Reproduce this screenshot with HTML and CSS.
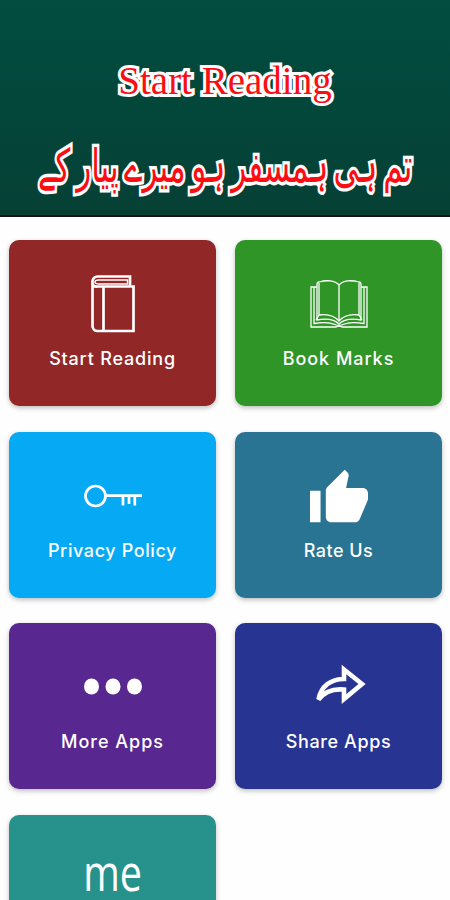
FILE: index.html
```
<!DOCTYPE html>
<html lang="en">
<head>
    <meta charset="UTF-8">
    <meta name="viewport" content="width=device-width, initial-scale=1.0">
    <title>Start Reading</title>
    <link rel="stylesheet" href="styles.css">
</head>
<body>

    <!-- Header -->
    <div class="header">
        <h1 class="title">Start Reading</h1>
        <p class="novel-name" lang="ur" dir="rtl">تم ہی ہمسفر ہو میرے پیار کے</p>
    </div>

    <!-- Menu -->
    <div class="menu">
        <a class="card red">
            <svg class="icon" viewBox="0 0 58 58">
                <path d="M46 11V1.500H13.500a5 5 0 0 0-5 5V51a5 5 0 0 0 5 5H49.500V11.500H13.500a4 4 0 0 1-5-5"/>
                <path d="M43.500 5H15q-4 0-4 2 0 2 4 2h28.500z" stroke-width="1.500"/>
                <path d="M19.500 12v44"/>
            </svg>
            <span class="label reading">Start Reading</span>
        </a>
        <a class="card green">
            <svg class="icon thin" viewBox="0 0 58 58">
                <path d="M7 12H1v40h25q3-2 6 0h25V12h-6"/>
                <path d="M4 12v36.500q14-2 21 1 4 2 8 0 7-3 21-1V12"/>
                <path d="M29 10C25 5 16 5 9 7q-2 0-2 3v35q15-3 22 4 7-7 22-4V10q0-3-2-3C42 5 33 5 29 10v36"/>
                <path d="M9 8v32l-3 5M49 8v32l3 5M9 40q13-2 20 6 7-8 20-6"/>
            </svg>
            <span class="label marks">Book Marks</span>
        </a>
        <a class="card sky">
            <svg class="icon" viewBox="0 0 58 58">
                <circle cx="11.500" cy="29" r="10"/>
                <path d="M22 28.700h36M39 29v9.500M45 29v8M50.800 29v9.500"/>
            </svg>
            <span class="label privacy">Privacy Policy</span>
        </a>
        <a class="card steel">
            <svg class="icon solid" viewBox="1 0 22 22">
                <path d="M1 21h4V9H1v12zm22-11c0-1.100-.9-2-2-2h-6.310l.95-4.570.03-.32c0-.41-.17-.79-.44-1.060L14.170 1 7.590 7.590C7.220 7.950 7 8.450 7 9v10c0 1.100.9 2 2 2h9c.83 0 1.540-.5 1.840-1.220l3.020-7.050c.09-.23.14-.47.14-.73v-2z"/>
            </svg>
            <span class="label rate">Rate Us</span>
        </a>
        <a class="card purple">
            <svg class="icon solid" viewBox="0 0 58 58">
                <ellipse cx="7.500" cy="28.500" rx="7.500" ry="8"/>
                <ellipse cx="29" cy="28.500" rx="7.500" ry="8"/>
                <ellipse cx="50.500" cy="28.500" rx="7.500" ry="8"/>
            </svg>
            <span class="label more">More Apps</span>
        </a>
        <a class="card navy">
            <svg class="icon arrow" viewBox="0 0 58 58">
                <path d="M34 11.500v9.500C21 21 11 28 8.500 41.500 15 33 23 30.500 34 31.500V41L52 26z"/>
            </svg>
            <span class="label share">Share Apps</span>
        </a>
        <a class="card teal">
            <span class="me">me</span>
        </a>
    </div>

</body>
</html>
```
FILE: styles.css
```
body {
    margin: 0;
    height: 900px;
    overflow: hidden;
    background-color: #fefefe;
    font-family: Inter, "Open Sans", sans-serif;
}

.header {
    box-sizing: border-box;
    height: 217px;
    padding-top: 58px;
    background: linear-gradient(#014d40, #064035);
    border-bottom: 2px solid #101414;
    text-align: center;
    color: #fb0d14;
}

.title {
    margin: 0;
    font-family: "Liberation Serif", serif;
    font-size: 39px;
    font-weight: normal;
    line-height: 45px;
    -webkit-text-stroke: 6px white;
    paint-order: stroke fill;
}

.novel-name {
    margin: 24px 0 0;
    font-family: "DejaVu Sans", sans-serif;
    font-size: 31px;
    line-height: 76px;
    white-space: nowrap;
    word-spacing: -4px;
    transform: scaleY(1.500);
    -webkit-text-stroke: 4.500px white;
    paint-order: stroke fill;
}

.menu {
    display: grid;
    grid-template-columns: 207px 207px;
    grid-auto-rows: 166px;
    gap: 25.500px 19px;
    padding: 23px 8px 0 9px;
}

.card {
    display: flex;
    flex-direction: column;
    align-items: center;
    box-sizing: border-box;
    padding-top: 35px;
    border-radius: 10px;
    box-shadow: 0 2px 5px rgba(0, 0, 0, 0.25);
    color: white;
}

.red { background-color: #922727; }
.green { background-color: #2e9526; }
.sky { background-color: #05a9f4; }
.steel { background-color: #297492; }
.purple { background-color: #592790; }
.navy { background-color: #273492; }
.teal { background-color: #27928b; }

.icon {
    width: 58px;
    height: 58px;
    fill: none;
    stroke: white;
    stroke-width: 2.700;
}

.thin { stroke-width: 1.300; }
.arrow { stroke-width: 4.600; }

.solid {
    fill: white;
    stroke: none;
}

.label {
    margin-top: 13px;
    font-size: 18px;
    font-weight: 500;
    line-height: 25px;
    white-space: nowrap;
}

.reading { letter-spacing: 0.800px; }
.marks { letter-spacing: 0.950px; }
.privacy { letter-spacing: 0.600px; }
.rate { letter-spacing: 0.500px; }
.more { letter-spacing: 1px; }
.share { letter-spacing: 0.600px; }

.me {
    margin-top: -8px;
    font-family: "Open Sans", sans-serif;
    font-size: 52px;
    line-height: 58px;
    transform: scaleX(0.760);
}
```
